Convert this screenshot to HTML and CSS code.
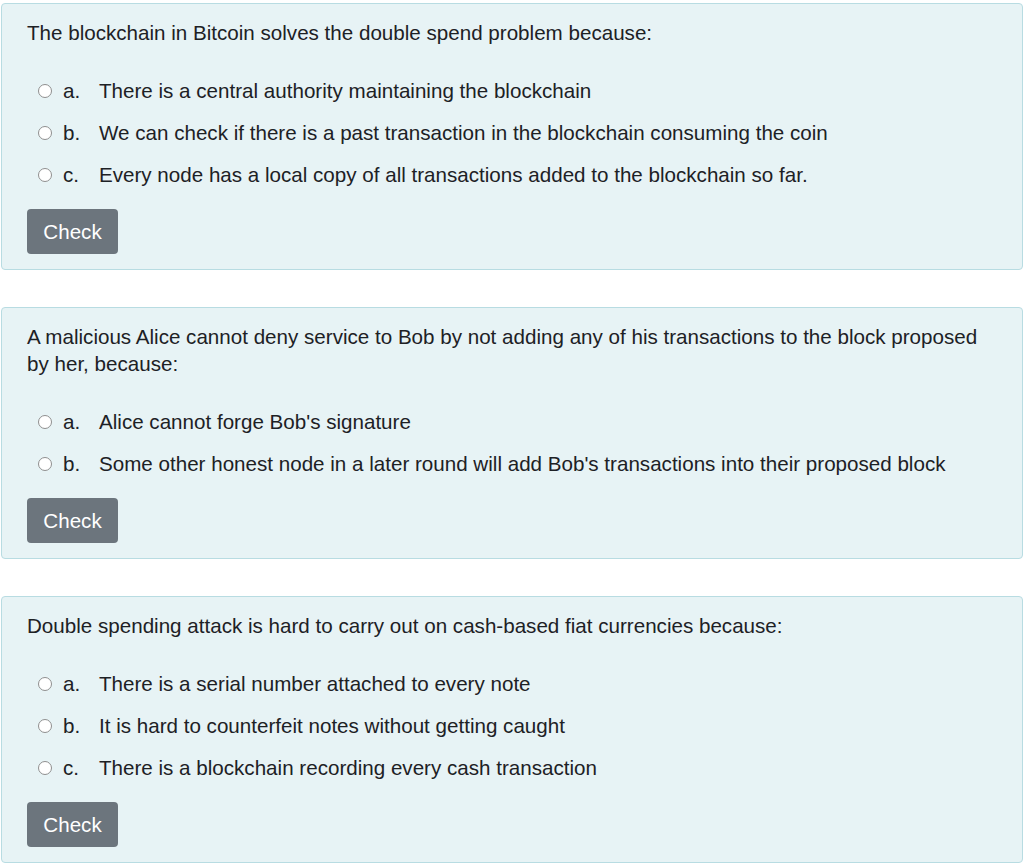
FILE: index.html
```html
<!DOCTYPE html>
<html>
<head>
<meta charset="utf-8">
<link rel="stylesheet" href="styles.css">
</head>
<body>
<div class="card">
  <div class="qtext">The blockchain in Bitcoin solves the double spend problem because:</div>
  <div class="answers">
    <label class="opt"><span class="radio"></span><span class="letter">a.</span><span class="atext">There is a central authority maintaining the blockchain</span></label>
    <label class="opt"><span class="radio"></span><span class="letter">b.</span><span class="atext">We can check if there is a past transaction in the blockchain consuming the coin</span></label>
    <label class="opt"><span class="radio"></span><span class="letter">c.</span><span class="atext">Every node has a local copy of all transactions added to the blockchain so far.</span></label>
  </div>
  <button class="btn">Check</button>
</div>
<div class="card">
  <div class="qtext">A malicious Alice cannot deny service to Bob by not adding any of his transactions to the block proposed by her, because:</div>
  <div class="answers">
    <label class="opt"><span class="radio"></span><span class="letter">a.</span><span class="atext">Alice cannot forge Bob's signature</span></label>
    <label class="opt"><span class="radio"></span><span class="letter">b.</span><span class="atext">Some other honest node in a later round will add Bob's transactions into their proposed block</span></label>
  </div>
  <button class="btn">Check</button>
</div>
<div class="card">
  <div class="qtext">Double spending attack is hard to carry out on cash-based fiat currencies because:</div>
  <div class="answers">
    <label class="opt"><span class="radio"></span><span class="letter">a.</span><span class="atext">There is a serial number attached to every note</span></label>
    <label class="opt"><span class="radio"></span><span class="letter">b.</span><span class="atext">It is hard to counterfeit notes without getting caught</span></label>
    <label class="opt"><span class="radio"></span><span class="letter">c.</span><span class="atext">There is a blockchain recording every cash transaction</span></label>
  </div>
  <button class="btn">Check</button>
</div>
</body>
</html>
```
FILE: styles.css
```css
html, body {
  margin: 0;
  padding: 0;
  background: #ffffff;
}
body {
  padding: 3px 1px 0 1px;
  font-family: "Liberation Sans", Arial, sans-serif;
  font-size: 20.6px;
  color: #1d2125;
  display: flex;
  flex-direction: column;
  gap: 37px;
}
.card {
  background: #e7f3f5;
  border: 1px solid #b8dce2;
  border-radius: 4px;
  padding: 15px 34px 15px 25px;
}
.qtext {
  line-height: 27px;
  margin-bottom: 24px;
}
.answers {
  display: flex;
  flex-direction: column;
  margin-bottom: 13px;
}
.opt {
  display: flex;
  align-items: center;
  height: 42px;
  padding-left: 11px;
}
.radio {
  width: 12px;
  height: 12px;
  border: 1.5px solid #8f8f8f;
  border-radius: 50%;
  background: #ffffff;
  flex: none;
}
.letter {
  margin-left: 11px;
  width: 36px;
  flex: none;
}
.atext {
  white-space: nowrap;
}
.btn {
  display: block;
  width: 91px;
  height: 45px;
  background: #6c757d;
  border: none;
  border-radius: 4px;
  color: #ffffff;
  font-family: "Liberation Sans", Arial, sans-serif;
  font-size: 20.6px;
  padding: 0;
}
```
